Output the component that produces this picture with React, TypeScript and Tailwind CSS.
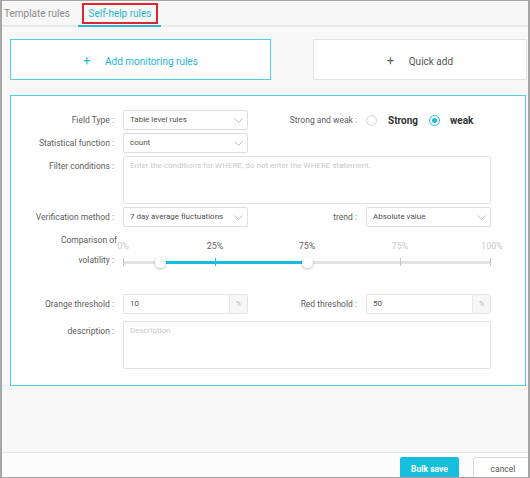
import React from 'react';

function Chevron() {
  return (
    <svg width="9" height="5" viewBox="0 0 9 5" className="shrink-0">
      <path d="M0.5 0.5 L4.5 4.5 L8.5 0.5" fill="none" stroke="#b3b3b3" strokeWidth="0.9" />
    </svg>
  );
}

function Select({ value }: { value: string }) {
  return (
    <div className="w-[125px] h-[20px] border border-[#dedede] rounded-[2px] bg-white flex items-center justify-between pl-[6px] pr-[4px]">
      <span className="text-[8px] text-[#4f4f4f] whitespace-nowrap">{value}</span>
      <Chevron />
    </div>
  );
}

function Label({ children }: { children: React.ReactNode }) {
  return (
    <div className="w-[104px] shrink-0 text-right pr-[1px] text-[8.5px] text-[#5c5c5c] leading-[20px] whitespace-nowrap">
      {children}
    </div>
  );
}

function RightLabel({ children }: { children: React.ReactNode }) {
  return (
    <div className="w-[109px] shrink-0 text-right text-[8.5px] text-[#5c5c5c] leading-[20px] whitespace-nowrap">
      {children}
    </div>
  );
}

function PercentInput({ value }: { value: string }) {
  return (
    <div className="w-[125px] h-[20px] border border-[#e4e4e4] rounded-[2px] bg-white flex">
      <div className="flex-1 pl-[6px] flex items-center text-[8px] text-[#4f4f4f]">{value}</div>
      <div className="w-[18px] border-l border-[#e8e8e8] bg-[#f6f6f6] flex items-center justify-center text-[7px] text-[#bbb]">
        %
      </div>
    </div>
  );
}

function TextArea({ placeholder }: { placeholder: string }) {
  return (
    <div className="w-[368px] h-[48px] border border-[#e2e2e2] rounded-[2px] bg-white px-[6px] pt-[3px] text-[8px] leading-[12px] text-[#c9c9c9] whitespace-nowrap overflow-hidden">
      {placeholder}
    </div>
  );
}

function Slider() {
  const marks = [
    { left: 'left-[0px]', text: '0%', dark: false },
    { left: 'left-[92px]', text: '25%', dark: true },
    { left: 'left-[184px]', text: '75%', dark: true },
    { left: 'left-[277px]', text: '75%', dark: false },
    { left: 'left-[369px]', text: '100%', dark: false },
  ];
  return (
    <div className="relative w-[368px] h-[40px]">
      {marks.map((m, i) => (
        <span
          key={i}
          className={`absolute top-[10px] -translate-x-1/2 text-[9px] leading-[12px] whitespace-nowrap ${m.left} ${
            m.dark ? 'text-[#666]' : 'text-[#c8c8c8]'
          }`}
        >
          {m.text}
        </span>
      ))}
      <div className="absolute left-0 right-0 top-[30.5px] h-[3px] bg-[#e2e2e2] rounded-full" />
      <div className="absolute left-[37px] w-[147px] top-[30.5px] h-[3px] bg-[#13bedc]" />
      <div className="absolute left-[0px] top-[28px] w-px h-[8px] bg-[#c4c4c4]" />
      <div className="absolute left-[92px] top-[28px] w-px h-[8px] bg-[#13bedc]" />
      <div className="absolute left-[277px] top-[28px] w-px h-[8px] bg-[#c4c4c4]" />
      <div className="absolute left-[367px] top-[28px] w-px h-[8px] bg-[#c4c4c4]" />
      <div className="absolute left-[31.5px] top-[26.5px] w-[11px] h-[11px] rounded-full bg-white shadow-[0_1px_3px_rgba(0,0,0,0.28)]" />
      <div className="absolute left-[178.5px] top-[26.5px] w-[11px] h-[11px] rounded-full bg-white shadow-[0_1px_3px_rgba(0,0,0,0.28)]" />
    </div>
  );
}

export default function App() {
  return (
    <div className="w-[530px] h-[478px] overflow-hidden flex flex-col border-y border-x-2 border-[#a6a6a6] bg-[#f8f8f8] font-['Roboto',sans-serif]">
      {/* Tabs */}
      <div className="h-[26px] shrink-0 flex border-b-2 border-[#e8e8e8] bg-[#f7f7f7]">
        <div className="w-[76px] pl-[2px] flex items-center text-[10px] text-[#8a8a8a] whitespace-nowrap">
          Template rules
        </div>
        <div className="w-[83px] -mb-[2px] border-b-2 border-[#27b9d7] pt-[2px] px-[4px]">
          <div className="h-[21px] w-[76px] border-2 border-[#e0262c] flex items-center justify-center text-[10px] text-[#22b6d5] whitespace-nowrap">
            Self-help rules
          </div>
        </div>
      </div>

      {/* Main */}
      <div className="flex-1 pt-[12px] pl-[8px] pr-[1px]">
        <div className="flex justify-between">
          <div className="w-[261px] h-[41px] border border-[#55cde4] bg-white flex items-center justify-center gap-[15px] pt-[3px] text-[10px] text-[#22b6d5]">
            <span className="text-[12px] leading-none">+</span>
            <span>Add monitoring rules</span>
          </div>
          <div className="w-[214px] h-[41px] border border-[#e4e4e4] bg-white flex items-center justify-center gap-[15px] pt-[3px] text-[10px] text-[#555]">
            <span className="text-[12px] leading-none">+</span>
            <span>Quick add</span>
          </div>
        </div>

        <div className="mt-[15px] w-[516px] border border-[#55cde4] bg-white pt-[14px] pb-[16px]">
          <div className="flex items-center h-[20px]">
            <Label>Field Type :</Label>
            <div className="ml-[8px]">
              <Select value="Table level rules" />
            </div>
            <RightLabel>Strong and weak :</RightLabel>
            <div className="ml-[9px] flex items-center">
              <div className="w-[11px] h-[11px] rounded-full border border-[#d2d2d2] bg-white" />
              <span className="ml-[11px] text-[10px] font-bold text-[#333]">Strong</span>
              <div className="ml-[11px] w-[11px] h-[11px] rounded-full border border-[#1cbcd9] bg-white flex items-center justify-center">
                <div className="w-[5px] h-[5px] rounded-full bg-[#1cbcd9]" />
              </div>
              <span className="ml-[10px] text-[10px] font-bold text-[#333]">weak</span>
            </div>
          </div>

          <div className="mt-[3px] flex items-center h-[20px]">
            <Label>Statistical function :</Label>
            <div className="ml-[8px]">
              <Select value="count" />
            </div>
          </div>

          <div className="mt-[3px] flex items-start">
            <Label>Filter conditions :</Label>
            <div className="ml-[8px]">
              <TextArea placeholder="Enter the conditions for WHERE, do not enter the WHERE statement." />
            </div>
          </div>

          <div className="mt-[3px] flex items-center h-[20px]">
            <Label>Verification method :</Label>
            <div className="ml-[8px]">
              <Select value="7 day average fluctuations" />
            </div>
            <RightLabel>trend :</RightLabel>
            <div className="ml-[9px]">
              <Select value="Absolute value" />
            </div>
          </div>

          <div className="mt-[3px] flex items-start h-[40px]">
            <Label>
              <div className="mr-[-3px]">Comparison of</div>
              <div>volatility :</div>
            </Label>
            <div className="ml-[8px]">
              <Slider />
            </div>
          </div>

          <div className="mt-[24px] flex items-center h-[20px]">
            <Label>Orange threshold :</Label>
            <div className="ml-[8px]">
              <PercentInput value="10" />
            </div>
            <RightLabel>Red threshold :</RightLabel>
            <div className="ml-[9px]">
              <PercentInput value="50" />
            </div>
          </div>

          <div className="mt-[7px] flex items-start">
            <Label>description :</Label>
            <div className="ml-[8px]">
              <TextArea placeholder="Description" />
            </div>
          </div>
        </div>
      </div>

      {/* Footer */}
      <div className="h-[25px] shrink-0 border-t border-[#e6e6e6] bg-[#fcfcfc] flex items-start pt-[4px] pl-[398px]">
        <div className="shrink-0 w-[59px] h-[24px] rounded-[2px] bg-[#17bfdd] flex justify-center pt-[5px] text-[8.5px] leading-[14px] font-bold text-white">
          Bulk save
        </div>
        <div className="shrink-0 ml-[14px] w-[60px] h-[24px] rounded-[2px] border border-[#dadada] bg-white flex justify-center pt-[4px] text-[8.5px] leading-[14px] text-[#555]">
          cancel
        </div>
      </div>
    </div>
  );
}
